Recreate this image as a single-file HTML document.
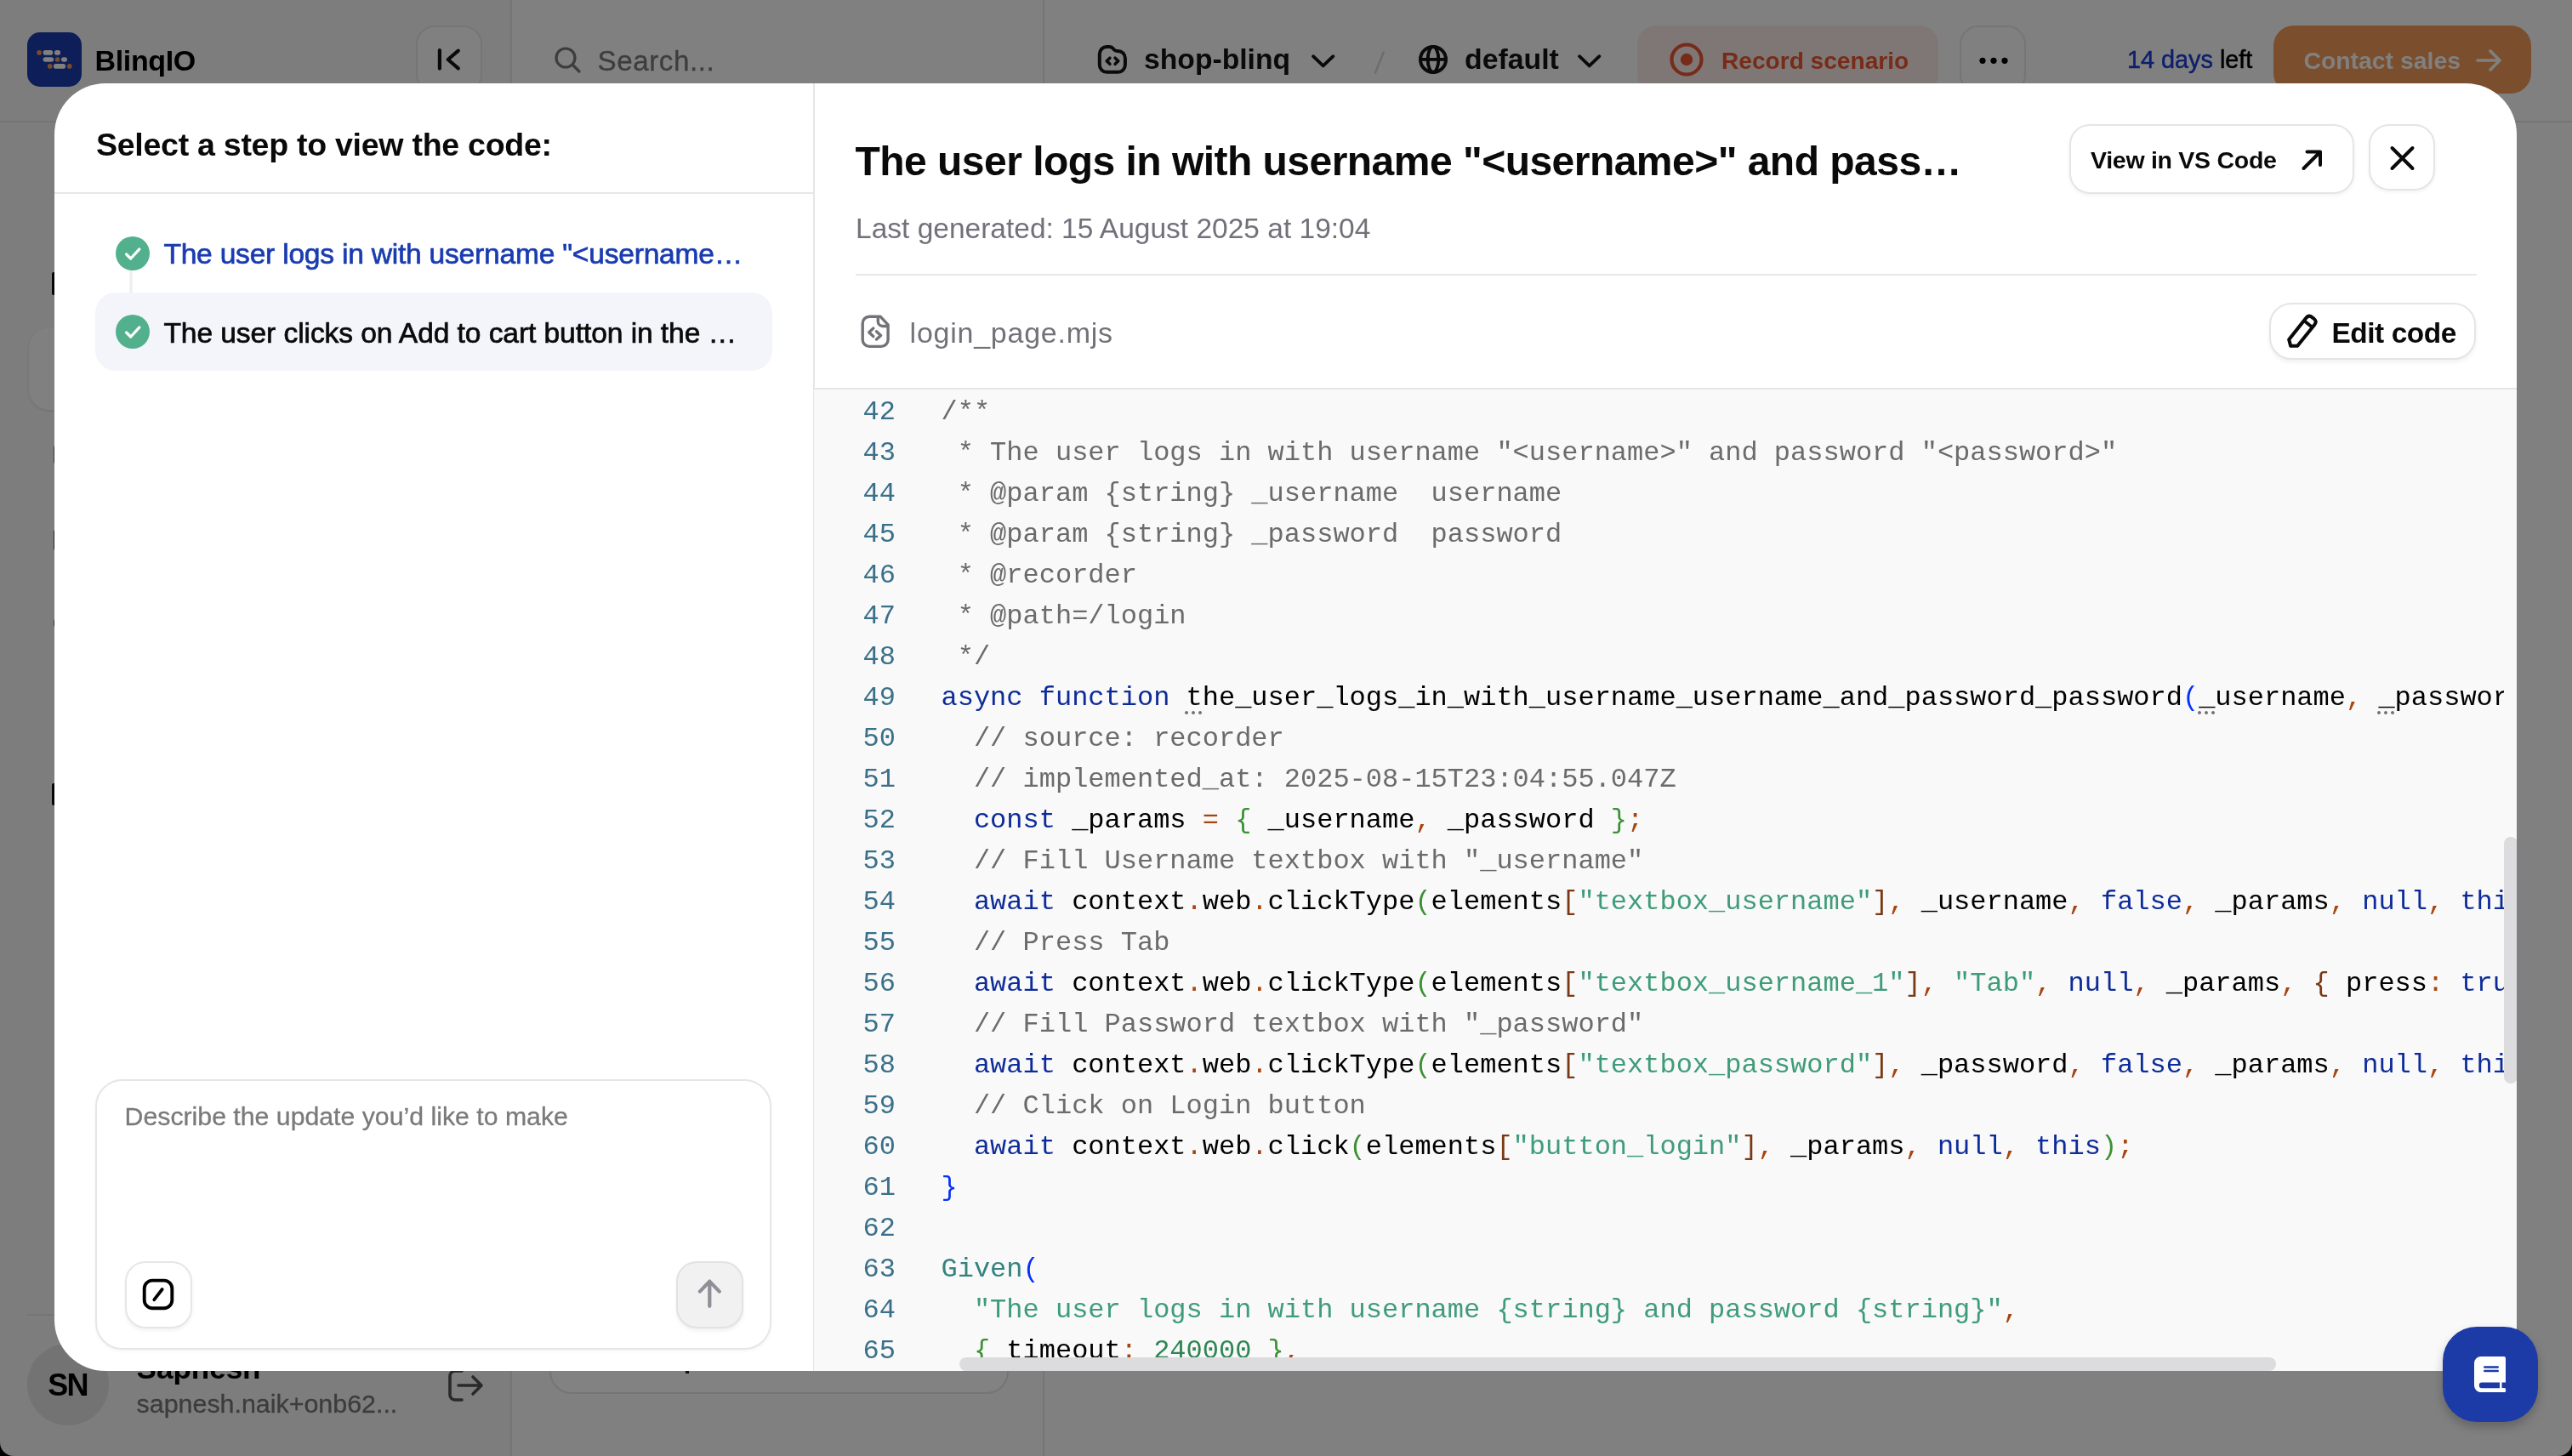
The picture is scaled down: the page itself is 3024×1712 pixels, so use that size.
<!DOCTYPE html>
<html>
<head>
<meta charset="utf-8">
<title>BlinqIO</title>
<style>
*{box-sizing:border-box;margin:0;padding:0}
html,body{width:3024px;height:1712px;overflow:hidden;background:#808080}
body{font-family:"Liberation Sans",sans-serif;position:relative}
.abs{position:absolute;display:block}
.t{position:absolute;white-space:nowrap;display:block}
#app{will-change:transform;position:absolute;left:0;top:0;width:3024px;height:1712px;background:#808080;overflow:hidden}
#modal{will-change:transform;position:absolute;left:64px;top:98px;width:2895px;height:1514px;background:#fff;border-radius:60px 60px 0 60px;overflow:hidden}
#code{position:absolute;background:#f9f9f9;border-top:2px solid #e5e5e6;overflow:hidden}
#codeclip{position:absolute;left:0;top:0;width:1987px;height:1154px;overflow:hidden}
.ln{position:absolute;left:0;width:96px;text-align:right;color:#3a7089;font-family:"Liberation Mono",monospace;font-size:32px;line-height:48px;height:48px;white-space:pre}
.cl{position:absolute;left:149.500px;font-family:"Liberation Mono",monospace;font-size:32px;line-height:48px;height:48px;white-space:pre;color:#000}
.c{color:#6b6b6b}.k{color:#0e2c99}.p{color:#a8440f}.s{color:#3f9c7a}.b1{color:#0431fa}.b2{color:#3b9133}.b3{color:#7b3814}.g{color:#35837f}.n{color:#2f8555}
.dots{position:absolute;width:24px;height:4px;background:radial-gradient(circle at 2px 2px,#757575 1.500px,rgba(117,117,117,0) 2.300px) 0 0/8px 4px repeat-x}
</style>
</head>
<body>
<div id="app"><div class="abs" style="left:0px;top:0px;width:600px;height:1712px;background:#7d7d7d"></div><div class="abs" style="left:0px;top:142px;width:3024px;height:2px;background:#757575"></div><div class="abs" style="left:600px;top:0px;width:2px;height:1712px;background:#757575"></div><div class="abs" style="left:1226px;top:0px;width:2px;height:142px;background:#757575"></div><div class="abs" style="left:1226px;top:144px;width:2px;height:1568px;background:#757575"></div><div class="abs" style="left:32px;top:38px;width:64px;height:64px;background:#0d1e58;border-radius:15px"></div><svg class="abs" style="left:0px;top:0px;" width="120" height="120" viewBox="0 0 120 120" fill="none"><circle cx="46.1" cy="61.9" r="2.8" fill="#7d4b28"/><rect x="50.6" y="59.1" width="11.600000000000001" height="5.6" rx="2.8" fill="#808080"/><rect x="64" y="59.1" width="7.099999999999994" height="5.6" rx="2.8" fill="#808080"/><rect x="50.6" y="67.2" width="12.5" height="5.6" rx="2.8" fill="#808080"/><circle cx="67.6" cy="70" r="2.8" fill="#7d4b28"/><rect x="72" y="67.2" width="7" height="5.6" rx="2.8" fill="#808080"/><circle cx="58.7" cy="77.9" r="2.8" fill="#7d4b28"/><rect x="62.9" y="75.10000000000001" width="14.199999999999996" height="5.6" rx="2.8" fill="#808080"/><circle cx="81.8" cy="77.9" r="2.8" fill="#7d4b28"/></svg><div class="t" style="left:111.50px;top:54.12px;font-size:34px;line-height:34px;height:34px;color:#000;font-weight:700;letter-spacing:-0.35px;">BlinqIO</div><div class="abs" style="left:489px;top:30px;width:78px;height:80px;border:2px solid #757575;border-radius:22px;background:#808080"></div><svg class="abs" style="left:489px;top:30px;" width="79" height="80" viewBox="0 0 79 80" fill="none"><path d="M27.9 29.2v21.4M49.8 29.7L37.7 40l12.1 10.3" stroke="#0a0a0a" stroke-width="4.2" stroke-linecap="round" stroke-linejoin="round"/></svg><svg class="abs" style="left:650px;top:53px;" width="36" height="36" viewBox="0 0 36 36" fill="none"><circle cx="15" cy="15" r="11" stroke="#3d3d3d" stroke-width="3.2"/><path d="M23.5 23.5L31 31" stroke="#3d3d3d" stroke-width="3.2" stroke-linecap="round"/></svg><div class="t" style="left:702.50px;top:54.90px;font-size:33.2px;line-height:33.2px;height:33.2px;color:#3d3d3d;font-weight:400;-webkit-text-stroke:0.3px #3d3d3d;letter-spacing:0.55px;">Search...</div><svg class="abs" style="left:1288px;top:50px;" width="40" height="40" viewBox="0 0 40 40" fill="none"><path d="M4.8 13.5a8.500 8.500 0 0 1 8.500-8.500h3.200c2.200 0 3.400.9 4.600 2.400l.6.8c1 1.200 1.900 1.700 3.700 1.700h1a8.500 8.500 0 0 1 8.500 8.500V26.300a8.500 8.500 0 0 1-8.500 8.500H13.300a8.500 8.500 0 0 1-8.500-8.500z" stroke="#0a0a0a" stroke-width="4" stroke-linejoin="round"/><path d="M16.900 18.200L13.200 21.700l3.700 3.600M23.100 18.200l3.700 3.500-3.700 3.600" stroke="#0a0a0a" stroke-width="3.600" stroke-linejoin="round" stroke-linecap="round"/></svg><div class="t" style="left:1345.00px;top:53.47px;font-size:33.7px;line-height:33.7px;height:33.7px;color:#0a0a0a;font-weight:700;">shop-blinq</div><svg class="abs" style="left:1538px;top:58px;" width="36" height="28" viewBox="0 0 36 28" fill="none"><path d="M6 8.2l11.700 11.2L29.400 8.200" stroke="#0a0a0a" stroke-width="3.800" stroke-linecap="round" stroke-linejoin="round"/></svg><svg class="abs" style="left:1610px;top:56px;" width="24" height="36" viewBox="0 0 24 36" fill="none"><path d="M17 4.700L6.600 30.400" stroke="#6d6d6d" stroke-width="2.600" stroke-linecap="butt"/></svg><svg class="abs" style="left:1665px;top:50px;" width="40" height="40" viewBox="0 0 40 40" fill="none"><circle cx="20" cy="19.900" r="15" stroke="#0a0a0a" stroke-width="4"/><ellipse cx="20" cy="19.900" rx="6.300" ry="15" stroke="#0a0a0a" stroke-width="3.800"/><path d="M5 19.900h30" stroke="#0a0a0a" stroke-width="3.800"/></svg><div class="t" style="left:1722.00px;top:53.39px;font-size:33.8px;line-height:33.8px;height:33.8px;color:#0a0a0a;font-weight:700;">default</div><svg class="abs" style="left:1851px;top:58px;" width="36" height="28" viewBox="0 0 36 28" fill="none"><path d="M6 8.2l11.700 11.2L29.400 8.200" stroke="#0a0a0a" stroke-width="3.800" stroke-linecap="round" stroke-linejoin="round"/></svg><div class="abs" style="left:1925px;top:30px;width:354px;height:80px;background:#7f7775;border-radius:22px"></div><svg class="abs" style="left:1961px;top:48px;" width="44" height="44" viewBox="0 0 44 44" fill="none"><circle cx="22" cy="22" r="17.5" stroke="#762c19" stroke-width="4.2"/><circle cx="22" cy="22" r="7.2" fill="#762c19"/></svg><div class="t" style="left:2024.00px;top:58.01px;font-size:28.1px;line-height:28.1px;height:28.1px;color:#762c19;font-weight:700;">Record scenario</div><div class="abs" style="left:2304px;top:30px;width:78px;height:80px;border:2px solid #757575;border-radius:22px"></div><svg class="abs" style="left:2304px;top:30px;" width="78" height="80" viewBox="0 0 78 80" fill="none"><circle cx="27" cy="41.3" r="3.6" fill="#000"/><circle cx="40" cy="41.3" r="3.6" fill="#000"/><circle cx="53" cy="41.3" r="3.6" fill="#000"/></svg><div class="t" style="left:2501.00px;top:56.42px;font-size:28.8px;line-height:28.8px;height:28.8px;color:#000;font-weight:400;-webkit-text-stroke:0.5px #000;"><span style="color:#0e1f6b;-webkit-text-stroke:0.5px #0e1f6b">14 days</span> left</div><div class="abs" style="left:2673px;top:30px;width:303px;height:80px;background:#7b4f2d;border-radius:24px"></div><div class="t" style="left:2708.40px;top:56.76px;font-size:28.4px;line-height:28.4px;height:28.4px;color:#808080;font-weight:700;">Contact sales</div><svg class="abs" style="left:2908px;top:54px;" width="36" height="34" viewBox="0 0 36 34" fill="none"><path d="M5 17h26M20 6l11 11-11 11" stroke="#808080" stroke-width="3.6" stroke-linecap="round" stroke-linejoin="round"/></svg><div class="abs" style="left:34px;top:385px;width:300px;height:97px;background:#808080;border-radius:24px;box-shadow:0 1px 3px rgba(0,0,0,.12)"></div><div class="abs" style="left:61px;top:320px;width:7px;height:27px;background:#050505;border-radius:2px"></div><div class="abs" style="left:62.5px;top:524px;width:5.5px;height:21px;background:#333;border-radius:2px"></div><div class="abs" style="left:62.5px;top:623px;width:5.5px;height:24px;background:#222;border-radius:2px"></div><div class="abs" style="left:62.5px;top:728px;width:5.5px;height:9px;background:#333;border-radius:2px"></div><div class="abs" style="left:61px;top:921px;width:7px;height:26px;background:#050505;border-radius:2px"></div><div class="abs" style="left:32px;top:1545px;width:540px;height:2px;background:#757575"></div><div class="abs" style="left:32px;top:1580px;width:96px;height:96px;background:#737373;border-radius:48px"></div><div class="t" style="left:56.30px;top:1611.43px;font-size:36px;line-height:36px;height:36px;color:#000;font-weight:700;letter-spacing:-1.7px;">SN</div><div class="t" style="left:160.60px;top:1591.37px;font-size:35px;line-height:35px;height:35px;color:#000;font-weight:700;">Sapnesh</div><div class="t" style="left:160.60px;top:1634.97px;font-size:30.4px;line-height:30.4px;height:30.4px;color:#3c3c3c;font-weight:400;-webkit-text-stroke:0.3px #3c3c3c;">sapnesh.naik+onb62...</div><svg class="abs" style="left:522px;top:1606px;" width="50" height="46" viewBox="0 0 50 46" fill="none"><path d="M21 6h-8a6 6 0 0 0-6 6v22a6 6 0 0 0 6 6h8" stroke="#2a2a2a" stroke-width="3.6" stroke-linecap="round"/><path d="M17 23h27M34 13l10 10-10 10" stroke="#2a2a2a" stroke-width="3.6" stroke-linecap="round" stroke-linejoin="round"/></svg><div class="abs" style="left:646px;top:1500px;width:540px;height:139px;border:2px solid #757575;border-radius:26px;background:#828282"></div><div class="abs" style="left:806px;top:1610px;width:4px;height:5px;background:#111"></div></div>
<div id="modal"><div class="abs" style="left:892px;top:0px;width:2px;height:1514px;background:#e6e6e8"></div><div class="t" style="left:49.00px;top:53.87px;font-size:37.6px;line-height:37.6px;height:37.6px;color:#0a0a0a;font-weight:700;letter-spacing:-0.3px;">Select a step to view the code:</div><div class="abs" style="left:0px;top:128px;width:892px;height:2px;background:#e6e6e8"></div><div class="abs" style="left:88px;top:220px;width:4px;height:28px;background:#f0f0f0"></div><div class="abs" style="left:48px;top:246px;width:796px;height:92px;background:#f4f5fb;border-radius:24px"></div><svg class="abs" style="left:72px;top:180px;" width="40" height="40" viewBox="0 0 40 40" fill="none"><circle cx="20" cy="20" r="20" fill="#53b08c"/><path d="M12.600 21l5.100 5L27.900 14.900" stroke="#fff" stroke-width="3.300" stroke-linecap="round" stroke-linejoin="round"/></svg><svg class="abs" style="left:72px;top:272px;" width="40" height="40" viewBox="0 0 40 40" fill="none"><circle cx="20" cy="20" r="20" fill="#53b08c"/><path d="M12.600 21l5.100 5L27.900 14.900" stroke="#fff" stroke-width="3.300" stroke-linecap="round" stroke-linejoin="round"/></svg><div class="t" style="left:128.40px;top:184.36px;font-size:33.6px;line-height:33.6px;height:33.6px;color:#1a3cb0;font-weight:400;-webkit-text-stroke:0.7px #1a3cb0;letter-spacing:-0.23px;">The user logs in with username "&lt;username…</div><div class="t" style="left:128.40px;top:276.56px;font-size:33.6px;line-height:33.6px;height:33.6px;color:#0a0a0a;font-weight:400;-webkit-text-stroke:0.7px #0a0a0a;letter-spacing:-0.085px;">The user clicks on Add to cart button in the …</div><div class="abs" style="left:48px;top:1171px;width:795px;height:318px;border:2px solid #e6e6e6;border-radius:32px;background:#fff;box-shadow:0 2px 4px rgba(0,0,0,.04)"></div><div class="t" style="left:82.60px;top:1199.98px;font-size:30.26px;line-height:30.26px;height:30.26px;color:#7a7a7a;font-weight:400;-webkit-text-stroke:0.3px #7a7a7a;">Describe the update you’d like to make</div><div class="abs" style="left:83px;top:1384.5px;width:79px;height:79px;border:2px solid #e6e6e6;border-radius:24px;background:#fff;box-shadow:0 3px 4px rgba(0,0,0,.05)"></div><svg class="abs" style="left:83px;top:1385px;" width="79" height="79" viewBox="0 0 79 79" fill="none"><rect x="22.700" y="22.650" width="32.600" height="32.600" rx="9.500" stroke="#000" stroke-width="3.900"/><path d="M43.700 33L34.300 45.200" stroke="#000" stroke-width="3.800" stroke-linecap="round"/></svg><div class="abs" style="left:730.5px;top:1384.5px;width:79.5px;height:79px;border:2px solid #e2e2e4;border-radius:24px;background:#f1f1f2;box-shadow:0 3px 4px rgba(0,0,0,.06)"></div><svg class="abs" style="left:730px;top:1385px;" width="80" height="78" viewBox="0 0 80 78" fill="none"><path d="M40.300 52.800V23.800M28.800 35.600L40.300 23.600l11.500 12" stroke="#908e96" stroke-width="4.200" stroke-linecap="round" stroke-linejoin="round"/></svg><div class="t" style="left:941.50px;top:68.37px;font-size:48px;line-height:48px;height:48px;color:#0a0a0a;font-weight:700;letter-spacing:-0.53px;">The user logs in with username "&lt;username&gt;" and pass…</div><div class="t" style="left:942.00px;top:154.34px;font-size:33.5px;line-height:33.5px;height:33.5px;color:#71717a;font-weight:400;">Last generated: 15 August 2025 at 19:04</div><div class="abs" style="left:942px;top:224px;width:1906px;height:2px;background:#e8e8ea"></div><div class="abs" style="left:2369px;top:48px;width:335px;height:82px;border:2px solid #e5e5e6;border-radius:24px;background:#fff;box-shadow:0 2px 4px rgba(0,0,0,.05)"></div><div class="t" style="left:2394.00px;top:76.27px;font-size:28.5px;line-height:28.5px;height:28.5px;color:#0a0a0a;font-weight:700;letter-spacing:-0.28px;">View in VS Code</div><svg class="abs" style="left:2636px;top:72px;" width="36" height="36" viewBox="0 0 36 36" fill="none"><path d="M8.5 28L28 8.5M12.5 8.5H28v15.5" stroke="#0a0a0a" stroke-width="4" stroke-linecap="round" stroke-linejoin="round"/></svg><div class="abs" style="left:2721px;top:48px;width:78px;height:78px;border:2px solid #e5e5e6;border-radius:24px;background:#fff;box-shadow:0 2px 4px rgba(0,0,0,.05)"></div><svg class="abs" style="left:2721px;top:48px;" width="78" height="78" viewBox="0 0 78 78" fill="none"><path d="M27.5 28l24 24M51.5 28l-24 24" stroke="#0a0a0a" stroke-width="4" stroke-linecap="round"/></svg><svg class="abs" style="left:944px;top:271px;" width="42" height="42" viewBox="0 0 42 42" fill="none"><path d="M6.200 11.200a8 8 0 0 1 8-8H27L36.100 12.800V30.400a8 8 0 0 1-8 8H14.200a8 8 0 0 1-8-8z" stroke="#727279" stroke-width="3.400" stroke-linejoin="round"/><path d="M24.300 3.400v5.600a5.500 5.500 0 0 0 5.500 5.500h6.200" stroke="#727279" stroke-width="3.400"/><path d="M18.800 17L13.700 21.700l5.100 4.800M22.500 20.700l5.100 4.700-5.100 4.600" stroke="#727279" stroke-width="3.400" stroke-linecap="round" stroke-linejoin="round"/></svg><div class="t" style="left:1005.60px;top:276.02px;font-size:34px;line-height:34px;height:34px;color:#727279;font-weight:400;letter-spacing:0.75px;">login_page.mjs</div><div class="abs" style="left:2604px;top:258px;width:243px;height:67px;border:2px solid #e5e5e6;border-radius:26px;background:#fff;box-shadow:0 3px 5px rgba(0,0,0,.06)"></div><svg class="abs" style="left:2623px;top:270px;" width="44" height="44" viewBox="0 0 44 44" fill="none"><path d="M4.200 31.300L24.450 5.790Q27.600 1.900 31.490 5.050L33.600 6.750Q37.500 9.900 34.350 13.790L14.200 38.700H6.200z" stroke="#0a0a0a" stroke-width="4.100" stroke-linejoin="round"/><path d="M21.900 8.900l9.900 8" stroke="#0a0a0a" stroke-width="3.800"/></svg><div class="t" style="left:2677.50px;top:276.53px;font-size:33.4px;line-height:33.4px;height:33.4px;color:#0a0a0a;font-weight:700;letter-spacing:-0.44px;">Edit code</div><div id="code" style="left:893px;top:358px;width:2002px;height:1156px"><div id="codeclip"><div class="ln" style="top:3px">42</div><div class="cl" style="top:3px"><span class="c">/**</span></div><div class="ln" style="top:51px">43</div><div class="cl" style="top:51px"><span class="c"> * The user logs in with username "&lt;username&gt;" and password "&lt;password&gt;"</span></div><div class="ln" style="top:99px">44</div><div class="cl" style="top:99px"><span class="c"> * @param {string} _username  username</span></div><div class="ln" style="top:147px">45</div><div class="cl" style="top:147px"><span class="c"> * @param {string} _password  password</span></div><div class="ln" style="top:195px">46</div><div class="cl" style="top:195px"><span class="c"> * @recorder</span></div><div class="ln" style="top:243px">47</div><div class="cl" style="top:243px"><span class="c"> * @path=/login</span></div><div class="ln" style="top:291px">48</div><div class="cl" style="top:291px"><span class="c"> */</span></div><div class="ln" style="top:339px">49</div><div class="cl" style="top:339px"><span class="k">async</span> <span class="k">function</span> the_user_logs_in_with_username_username_and_password_password<span class="b1">(</span>_username<span class="p">,</span> _password<span class="b1">)</span> <span class="b1">{</span></div><div class="ln" style="top:387px">50</div><div class="cl" style="top:387px">  <span class="c">// source: recorder</span></div><div class="ln" style="top:435px">51</div><div class="cl" style="top:435px">  <span class="c">// implemented_at: 2025-08-15T23:04:55.047Z</span></div><div class="ln" style="top:483px">52</div><div class="cl" style="top:483px">  <span class="k">const</span> _params <span class="p">=</span> <span class="b2">{</span> _username<span class="p">,</span> _password <span class="b2">}</span><span class="p">;</span></div><div class="ln" style="top:531px">53</div><div class="cl" style="top:531px">  <span class="c">// Fill Username textbox with "_username"</span></div><div class="ln" style="top:579px">54</div><div class="cl" style="top:579px">  <span class="k">await</span> context<span class="p">.</span>web<span class="p">.</span>clickType<span class="b2">(</span>elements<span class="b3">[</span><span class="s">"textbox_username"</span><span class="b3">]</span><span class="p">,</span> _username<span class="p">,</span> <span class="k">false</span><span class="p">,</span> _params<span class="p">,</span> <span class="k">null</span><span class="p">,</span> <span class="k">this</span><span class="b2">)</span><span class="p">;</span></div><div class="ln" style="top:627px">55</div><div class="cl" style="top:627px">  <span class="c">// Press Tab</span></div><div class="ln" style="top:675px">56</div><div class="cl" style="top:675px">  <span class="k">await</span> context<span class="p">.</span>web<span class="p">.</span>clickType<span class="b2">(</span>elements<span class="b3">[</span><span class="s">"textbox_username_1"</span><span class="b3">]</span><span class="p">,</span> <span class="s">"Tab"</span><span class="p">,</span> <span class="k">null</span><span class="p">,</span> _params<span class="p">,</span> <span class="b3">{</span> press<span class="p">:</span> <span class="k">true</span> <span class="b3">}</span><span class="p">,</span> <span class="k">this</span><span class="b2">)</span><span class="p">;</span></div><div class="ln" style="top:723px">57</div><div class="cl" style="top:723px">  <span class="c">// Fill Password textbox with "_password"</span></div><div class="ln" style="top:771px">58</div><div class="cl" style="top:771px">  <span class="k">await</span> context<span class="p">.</span>web<span class="p">.</span>clickType<span class="b2">(</span>elements<span class="b3">[</span><span class="s">"textbox_password"</span><span class="b3">]</span><span class="p">,</span> _password<span class="p">,</span> <span class="k">false</span><span class="p">,</span> _params<span class="p">,</span> <span class="k">null</span><span class="p">,</span> <span class="k">this</span><span class="b2">)</span><span class="p">;</span></div><div class="ln" style="top:819px">59</div><div class="cl" style="top:819px">  <span class="c">// Click on Login button</span></div><div class="ln" style="top:867px">60</div><div class="cl" style="top:867px">  <span class="k">await</span> context<span class="p">.</span>web<span class="p">.</span>click<span class="b2">(</span>elements<span class="b3">[</span><span class="s">"button_login"</span><span class="b3">]</span><span class="p">,</span> _params<span class="p">,</span> <span class="k">null</span><span class="p">,</span> <span class="k">this</span><span class="b2">)</span><span class="p">;</span></div><div class="ln" style="top:915px">61</div><div class="cl" style="top:915px"><span class="b1">}</span></div><div class="ln" style="top:963px">62</div><div class="cl" style="top:963px"></div><div class="ln" style="top:1011px">63</div><div class="cl" style="top:1011px"><span class="g">Given</span><span class="b1">(</span></div><div class="ln" style="top:1059px">64</div><div class="cl" style="top:1059px">  <span class="s">"The user logs in with username {string} and password {string}"</span><span class="p">,</span></div><div class="ln" style="top:1107px">65</div><div class="cl" style="top:1107px">  <span class="b2">{</span> timeout<span class="p">:</span> <span class="n">240000</span> <span class="b2">}</span><span class="p">,</span></div><div class="dots" style="left:436.2px;top:378px"></div><div class="dots" style="left:1626.6px;top:378px"></div><div class="dots" style="left:1837.8px;top:378px"></div></div><div class="abs" style="left:1987px;top:526px;width:16px;height:290px;background:#dcdcde;border-radius:8px 8px 8px 8px"></div><div class="abs" style="left:171px;top:1138px;width:1548px;height:16px;background:#dcdcde;border-radius:8px"></div></div></div>
<div class="abs" style="left:2872px;top:1560px;width:112px;height:112px;background:#1c3ba7;border-radius:40px;box-shadow:0 6px 12px rgba(0,0,0,.22)"></div>
<svg class="abs" style="left:2909.3px;top:1594.7px;" width="37.3" height="42.3" viewBox="0 0 37.3 42.3" fill="none"><path d="M8 0h27a2 2 0 0 1 2 2v28.5H9a3.2 3.2 0 0 0 0 6.400h26.500a1.600 1.600 0 0 1 1.600 1.600v2a1.600 1.600 0 0 1-1.600 1.600H8a8 8 0 0 1-8-8V8a8 8 0 0 1 8-8z" fill="#fff"/><rect x="11" y="11.200" width="18" height="2.600" rx="1.300" fill="#1c3ba7"/><rect x="11" y="15.700" width="18" height="2.600" rx="1.300" fill="#1c3ba7"/><path d="M9 32.200h21v5H9a2.500 2.500 0 0 1 0-5z" fill="#1c3ba7"/><rect x="30" y="30" width="2.500" height="8" fill="#fff"/></svg>
<svg class="abs" style="left:0;top:1696px" width="16" height="16"><path d="M0 0v16h16A16 16 0 0 1 0 0z" fill="#000"/></svg>
<svg class="abs" style="left:3008px;top:1696px" width="16" height="16"><path d="M16 0v16H0A16 16 0 0 0 16 0z" fill="#000"/></svg>
</body>
</html>
